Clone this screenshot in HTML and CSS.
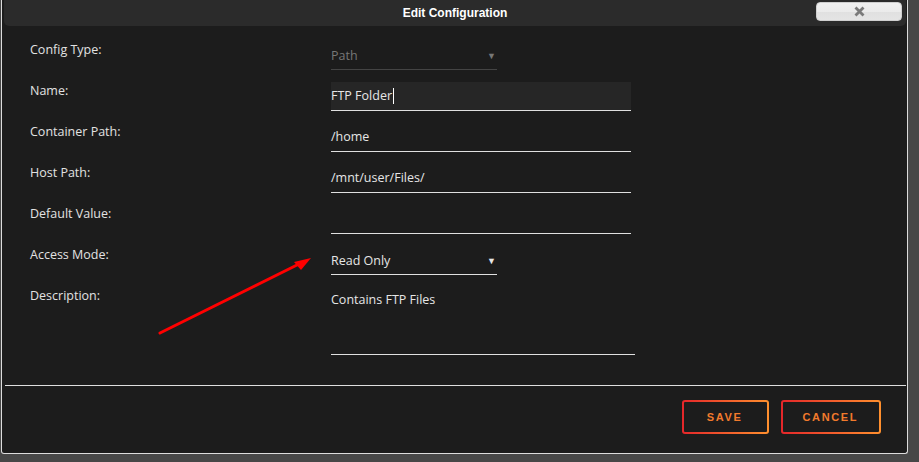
FILE: index.html
```html
<!DOCTYPE html>
<html lang="en">

<head>
  <meta charset="UTF-8">
  <title>Edit Configuration</title>
  <link rel="stylesheet" href="styles.css">
</head>

<body>
  <div class="dialog">
    <div class="titlebar">
      <span></span>
      <span class="title">Edit Configuration</span>
      <button class="close" type="button">
        <svg width="11" height="11" viewBox="0 0 11 11">
          <path d="M1.5 1.5 L9.5 9.5 M9.5 1.5 L1.5 9.5" stroke="#7a7a7a" stroke-width="2.8" />
        </svg>
      </button>
    </div>

    <div class="form">
      <div class="row">
        <label>Config Type:</label>
        <div class="select muted">Path<span class="caret-down">&#9660;</span></div>
      </div>
      <div class="row">
        <label>Name:</label>
        <div class="field focus">FTP Folder<span class="cursor"></span></div>
      </div>
      <div class="row">
        <label>Container Path:</label>
        <div class="field">/home</div>
      </div>
      <div class="row">
        <label>Host Path:</label>
        <div class="field">/mnt/user/Files/</div>
      </div>
      <div class="row">
        <label>Default Value:</label>
        <div class="field"></div>
      </div>
      <div class="row">
        <label>Access Mode:</label>
        <div class="select">Read Only<span class="caret-down">&#9660;</span></div>
      </div>
      <div class="row">
        <label>Description:</label>
        <div class="textarea">Contains FTP Files</div>
      </div>
    </div>

    <div class="divider"></div>

    <div class="actions">
      <button class="btn" type="button">SAVE</button>
      <button class="btn" type="button">CANCEL</button>
    </div>
  </div>

  <!-- annotation arrow -->
  <svg class="arrow" width="919" height="462" viewBox="0 0 919 462">
    <line x1="160" y1="333" x2="301" y2="263" stroke="#f00" stroke-width="3" stroke-linecap="round" />
    <polygon points="311,258 294,262 301,270" fill="#f00" />
  </svg>
</body>

</html>
```

FILE: styles.css
```css
html,
body {
  margin: 0;
  height: 462px;
  overflow: hidden;
}

body {
  background-color: #474747;
  font-family: "Open Sans", "Liberation Sans", sans-serif;
  font-size: 12.5px;
  color: #e6e6e6;
  position: relative;
}

.dialog {
  margin-left: 1px;
  width: 905px;
  height: 453px;
  background-color: #1c1c1c;
  border: 1px solid #dcdcdc;
  border-top: none;
  border-radius: 0 0 3px 3px;
}

.titlebar {
  margin: 0 1px 0 2px;
  height: 26px;
  background-color: #2b2b2b;
  border-radius: 0 0 5px 5px;
  display: grid;
  grid-template-columns: 1fr auto 1fr;
  align-items: center;
}

.title {
  font-family: "Liberation Sans", Arial, sans-serif;
  font-weight: bold;
  font-size: 12px;
  color: #fff;
}

.close {
  justify-self: end;
  align-self: start;
  margin: 2px 4px 0 0;
  width: 86px;
  height: 19px;
  padding: 0;
  border: 1px solid #cfcfcf;
  border-radius: 4px;
  background: linear-gradient(#f0f0f0 0%, #ebebeb 50%, #e0e0e0 51%, #e4e4e4 100%);
  display: flex;
  align-items: center;
  justify-content: center;
}

.form {
  padding: 15px 0 0 28px;
  display: flex;
  flex-direction: column;
  gap: 12px;
}

.row {
  display: grid;
  grid-template-columns: 301px auto;
  align-items: start;
}

label {
  padding-top: 1px;
  line-height: 16px;
  color: #e2e2e2;
}

.field {
  width: 300px;
  height: 28px;
  line-height: 28px;
  border-bottom: 1px solid #e0e0e0;
  white-space: nowrap;
}

.field.focus {
  background-color: #262626;
}

.cursor {
  display: inline-block;
  width: 1px;
  height: 16px;
  margin-left: 1px;
  vertical-align: -4px;
  background-color: #fff;
}

.select {
  width: 166px;
  height: 28px;
  line-height: 29px;
  border-bottom: 1px solid #e0e0e0;
  display: flex;
  justify-content: space-between;
}

.select.muted {
  color: #777;
  border-bottom-color: #444;
}

.caret-down {
  font-size: 9px;
  padding-right: 1px;
}

.textarea {
  width: 304px;
  height: 62px;
  padding-top: 5px;
  line-height: 16px;
  border-bottom: 1px solid #e0e0e0;
}

.divider {
  margin: 30px 1px 0 3px;
  height: 1px;
  background-color: #dedede;
}

.actions {
  padding: 14px 26px 0 0;
  display: flex;
  justify-content: flex-end;
  gap: 12px;
}

.btn {
  min-width: 87px;
  height: 34px;
  padding: 0 21px 0 20px;
  font-family: "Liberation Sans", Arial, sans-serif;
  font-size: 11px;
  font-weight: bold;
  letter-spacing: 1.6px;
  color: #f27a2c;
  border: 2px solid transparent;
  border-radius: 3px;
  background:
    linear-gradient(#1c1c1c, #1c1c1c) padding-box,
    linear-gradient(90deg, #e4262a, #ff902e) border-box;
  cursor: pointer;
}

.arrow {
  position: absolute;
  left: 0;
  top: 0;
  pointer-events: none;
}
```
